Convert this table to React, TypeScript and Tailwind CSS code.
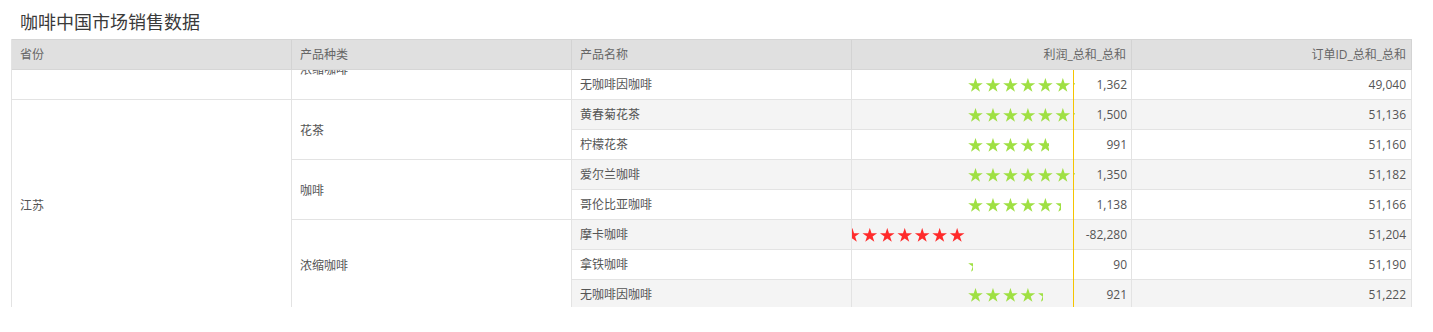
type Row = {
  province?: { text: string; span: number; clipped?: boolean };
  category?: { text: string; span: number; clipped?: boolean };
  name: string;
  profit: number;
  orders: number;
};

const rows: Row[] = [
  { province: { text: '', span: 1 }, category: { text: '浓缩咖啡', span: 1, clipped: true }, name: '无咖啡因咖啡', profit: 1362, orders: 49040 },
  { province: { text: '江苏', span: 7 }, category: { text: '花茶', span: 2 }, name: '黄春菊花茶', profit: 1500, orders: 51136 },
  { name: '柠檬花茶', profit: 991, orders: 51160 },
  { category: { text: '咖啡', span: 2 }, name: '爱尔兰咖啡', profit: 1350, orders: 51182 },
  { name: '哥伦比亚咖啡', profit: 1138, orders: 51166 },
  { category: { text: '浓缩咖啡', span: 3 }, name: '摩卡咖啡', profit: -82280, orders: 51204 },
  { name: '拿铁咖啡', profit: 90, orders: 51190 },
  { name: '无咖啡因咖啡', profit: 921, orders: 51222 },
];

const spanClass: Record<number, string> = {
  1: 'row-span-1',
  2: 'row-span-2',
  3: 'row-span-3',
  7: 'row-span-7',
};

// pixels per unit of profit, and star pitch
const SCALE = 0.0843;
const PITCH = 17.47;

function starPoints(cx: number, cy: number, R: number) {
  const r = R * 0.382;
  const pts: string[] = [];
  for (let i = 0; i < 10; i++) {
    const rad = i % 2 === 0 ? R : r;
    const a = (Math.PI / 5) * i - Math.PI / 2;
    pts.push(`${(cx + rad * Math.cos(a)).toFixed(2)},${(cy + rad * Math.sin(a)).toFixed(2)}`);
  }
  return pts.join(' ');
}

function Stars({ count, color, fromRight }: { count: number; color: string; fromRight?: boolean }) {
  const width = count * PITCH;
  return (
    <svg width={width} height={14} className="shrink-0 block">
      {Array.from({ length: count }).map((_, i) => {
        const cx = fromRight ? width - 7.5 - i * PITCH : 7.5 + i * PITCH;
        return <polygon key={i} points={starPoints(cx, 7.6, 7.7)} fill={color} />;
      })}
    </svg>
  );
}

function ProfitBar({ value }: { value: number }) {
  const w = Math.abs(value) * SCALE;
  return (
    <div className="w-[221px] h-full flex items-center shrink-0">
      <div className="w-[113px] h-full flex items-center justify-end overflow-hidden shrink-0">
        {value < 0 && (
          <div className="h-[14px] overflow-hidden flex justify-end" style={{ width: w }}>
            <Stars count={12} color="#ff2b2b" fromRight />
          </div>
        )}
      </div>
      <div className="w-[108px] h-full flex items-center shrink-0">
        {value > 0 && (
          <div className="h-[14px] overflow-hidden pl-[3px] shrink-0" style={{ width: Math.min(w, 110) }}>
            <Stars count={8} color="#9fe043" />
          </div>
        )}
      </div>
    </div>
  );
}

const fmt = (n: number) => n.toLocaleString('en-US');

export default function App() {
  return (
    <div className="bg-white w-[1433px] h-[332px] overflow-hidden text-[#555] font-['Open_Sans','Noto_Sans_CJK_SC',sans-serif]">
      <div className="h-[39px] pt-[12px] pl-[20px] text-[18px] leading-[20px] text-[#3a3a3a]">咖啡中国市场销售数据</div>

      <div className="ml-[11px] w-[1401px] border-l border-[#e3e3e3]">
        <div className="grid grid-cols-[repeat(5,280px)] h-[31px] bg-[#e0e0e0] border-t border-b border-[#d6d6d6] text-[12px] text-[#666]">
          <div className="border-r border-[#d3d3d3] pl-2 pt-px flex items-center">省份</div>
          <div className="border-r border-[#d3d3d3] pl-2 pt-px flex items-center">产品种类</div>
          <div className="border-r border-[#d3d3d3] pl-2 pt-px flex items-center">产品名称</div>
          <div className="border-r border-[#d3d3d3] pr-[5px] pt-px flex items-center justify-end">利润_总和_总和</div>
          <div className="border-r border-[#d3d3d3] pr-[5px] pt-px flex items-center justify-end">订单ID_总和_总和</div>
        </div>

        <div className="h-[237px] overflow-hidden">
          <div className="grid grid-cols-[repeat(5,280px)] auto-rows-[30px] text-[12px]">
            {rows.map((r, i) => {
              const stripe = i % 2 === 1 ? 'bg-[#f4f4f4]' : 'bg-white';
              return [
                r.province && (
                  <div key={`p${i}`} className={`${spanClass[r.province.span]} border-r border-b border-[#e3e3e3] bg-white pl-2 pt-[2px] flex items-center`}>
                    {r.province.text}
                  </div>
                ),
                r.category && (
                  <div key={`c${i}`} className={`${spanClass[r.category.span]} border-r border-b border-[#e3e3e3] bg-white pl-2 overflow-hidden ${r.category.clipped ? '' : 'pt-[2px] flex items-center'}`}>
                    {r.category.clipped ? <div className="leading-[30px] -mt-[15px]">{r.category.text}</div> : r.category.text}
                  </div>
                ),
                <div key={`n${i}`} className={`${stripe} border-r border-b border-[#e3e3e3] pl-2 pt-px flex items-center`}>{r.name}</div>,
                <div key={`v${i}`} className={`${stripe} border-r border-b border-[#e3e3e3] flex`}>
                  <ProfitBar value={r.profit} />
                  <div className="w-px h-[30px] bg-[#f5c400] shrink-0" />
                  <div className="flex-1 pr-[4px] pt-px flex items-center justify-end">{fmt(r.profit)}</div>
                </div>,
                <div key={`o${i}`} className={`${stripe} border-r border-b border-[#e3e3e3] pr-[5px] pt-px flex items-center justify-end`}>{fmt(r.orders)}</div>,
              ];
            })}
          </div>
        </div>
      </div>
    </div>
  );
}
